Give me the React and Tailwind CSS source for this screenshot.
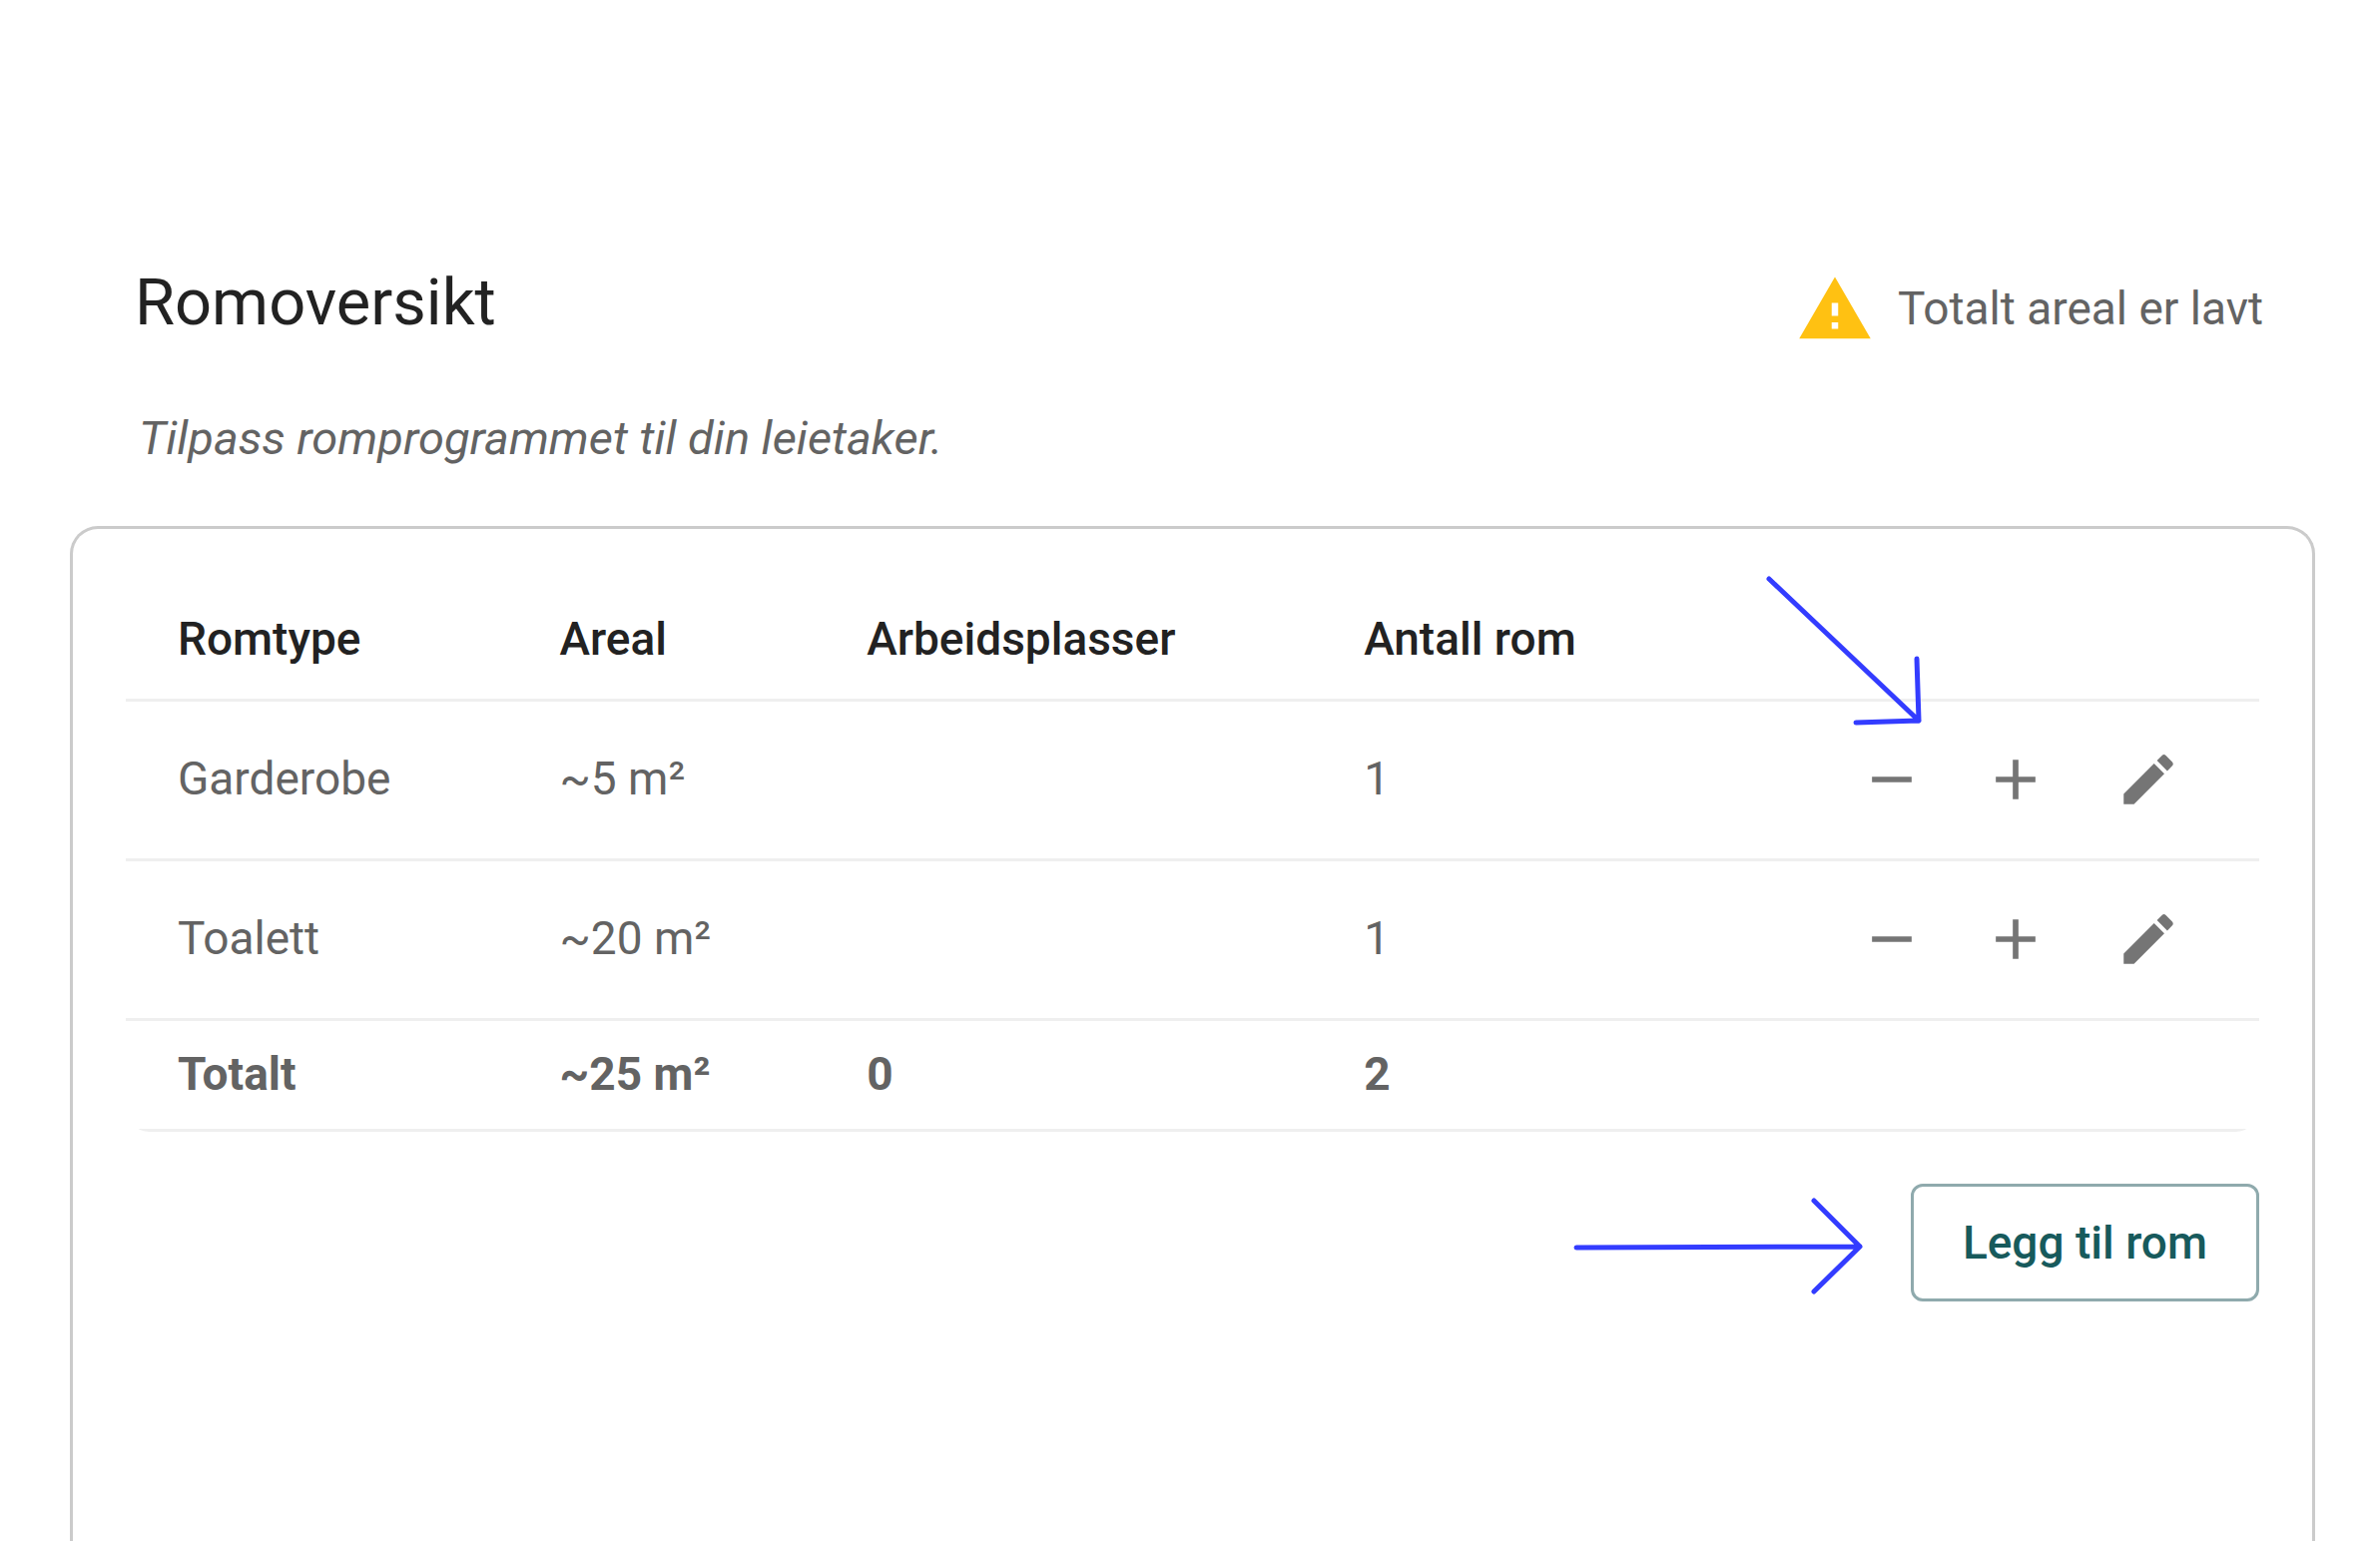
import React from "react";

const rooms = [
  { type: "Garderobe", area: "~5 m²", desks: "", count: 1 },
  { type: "Toalett", area: "~20 m²", desks: "", count: 1 },
];

function Icon({ d, className }) {
  return (
    <svg viewBox="0 0 24 24" fill="currentColor" aria-hidden="true" className={className}>
      <path d={d} />
    </svg>
  );
}

const REMOVE = "M19 13H5v-2h14v2z";
const ADD = "M19 13h-6v6h-2v-6H5v-2h6V5h2v6h6v2z";
const EDIT =
  "M3 17.25V21h3.75L17.81 9.94l-3.75-3.75L3 17.25zM20.71 7.04c.39-.39.39-1.02 0-1.41l-2.34-2.34a.9959.9959 0 0 0-1.41 0l-1.83 1.83 3.75 3.75 1.83-1.83z";
const WARNING = "M1 21h22L12 2 1 21zm12-3h-2v-2h2v2zm0-4h-2v-4h2v4z";

function RoomRow({ room }) {
  return (
    <tr className="h-[160px] border-b-3 border-[#efefef]">
      <td className="pb-0.5 pl-[52px]">{room.type}</td>
      <td className="pb-0.5 pl-[52px]">{room.area}</td>
      <td className="pb-0.5 pl-[52px]">{room.desks}</td>
      <td className="pb-0.5 pl-[52px]">{room.count}</td>
      <td className="pr-10">
        <div className="flex items-center justify-end text-[#757575]">
          <button type="button" aria-label={`Fjern ${room.type}`} className="flex w-[124px] justify-center">
            <Icon d={REMOVE} className="size-[68px]" />
          </button>
          <button type="button" aria-label={`Legg til ${room.type}`} className="flex w-[124px] justify-center">
            <Icon d={ADD} className="size-[68px]" />
          </button>
          <button type="button" aria-label={`Rediger ${room.type}`} className="flex w-[142px] justify-center">
            <Icon d={EDIT} className="size-[66px]" />
          </button>
        </div>
      </td>
    </tr>
  );
}

export default function App() {
  return (
    <main className="flex min-h-screen flex-col bg-white pr-[65px] pl-[70px] pt-[265px] font-[Roboto,sans-serif] text-[46px] leading-[64px] text-[#636363]">
      <header className="flex items-start justify-between pl-[65px] pr-[52px]">
        <div>
          <h1 className="text-[65px] leading-[76px] text-[#222222]">Romoversikt</h1>
          <p className="mt-[66px] pl-1 text-[47px] italic">Tilpass romprogrammet til din leietaker.</p>
        </div>
        <div role="status" className="mt-[6px] flex items-center gap-6">
          <Icon d={WARNING} className="size-[78px] text-[#ffc112]" />
          <span className="pb-0.5">Totalt areal er lavt</span>
        </div>
      </header>

      <section className="relative mt-14 flex-1 rounded-t-[28px] border-3 border-b-0 border-[#cbcbcb] px-[53px] pt-[53px]">
        <div className="overflow-hidden rounded-b-3xl">
          <table className="w-full border-collapse text-left">
            <colgroup>
              <col className="w-[17.9%]" />
              <col className="w-[14.4%]" />
              <col className="w-[23.3%]" />
              <col className="w-[15%]" />
              <col />
            </colgroup>
            <thead>
              <tr className="h-[118px] border-b-3 border-[#efefef] text-[#222222]">
                <th className="pb-0.5 pl-[52px] font-medium">Romtype</th>
                <th className="pb-0.5 pl-[52px] font-medium">Areal</th>
                <th className="pb-0.5 pl-[52px] font-medium">Arbeidsplasser</th>
                <th className="pb-0.5 pl-[52px] font-medium">Antall rom</th>
                <td />
              </tr>
            </thead>
            <tbody>
              {rooms.map((room) => (
                <RoomRow key={room.type} room={room} />
              ))}
            </tbody>
            <tfoot>
              <tr className="h-[111px] border-b-3 border-[#efefef] font-bold">
                <th scope="row" className="pb-0.5 pl-[52px]">Totalt</th>
                <td className="pb-0.5 pl-[52px]">~25 m²</td>
                <td className="pb-0.5 pl-[52px]">0</td>
                <td className="pb-0.5 pl-[52px]">2</td>
                <td />
              </tr>
            </tfoot>
          </table>
        </div>

        <div className="mt-[52px] flex justify-end">
          <button
            type="button"
            className="rounded-xl border-3 border-[#8faaad] px-[49px] py-6 font-medium text-[#175a5c]"
          >
            Legg til rom
          </button>
        </div>

        {/* Annotation arrows laid over the card */}
        <svg
          aria-hidden="true"
          viewBox="0 0 360 740"
          className="pointer-events-none absolute top-[41px] right-[386px] h-[740px] w-[360px] fill-none stroke-[#333cff] stroke-5"
          strokeLinecap="round"
          strokeLinejoin="round"
        >
          <path d="M202 9L352 151M350 89L352 151L289 153" />
          <path d="M9 679L293 678M247 632L293 678L247 723" />
        </svg>
      </section>
    </main>
  );
}
